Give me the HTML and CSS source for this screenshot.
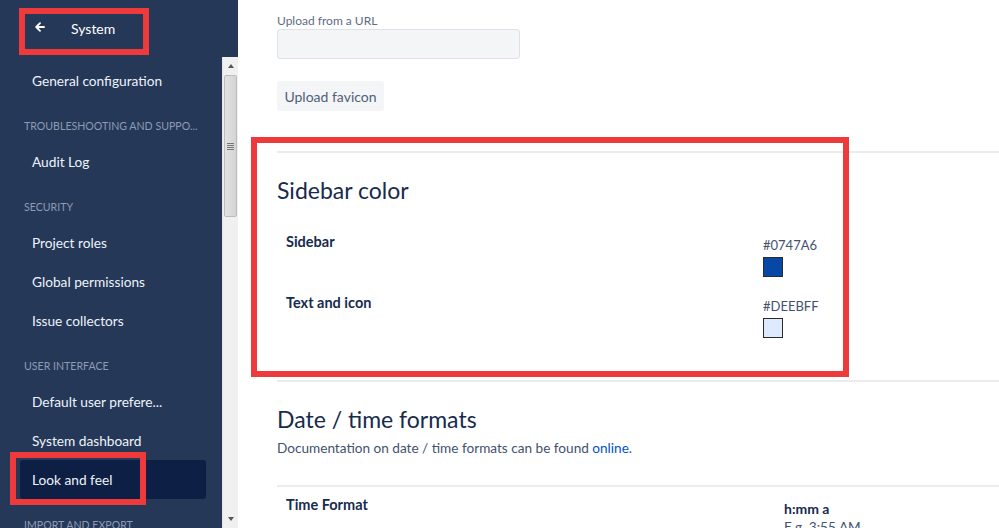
FILE: index.html
```html
<!DOCTYPE html>
<html lang="en">
<head>
<meta charset="utf-8">
<title>Look and feel</title>
<link rel="stylesheet" href="styles.css">
</head>
<body>
<div class="page">
  <aside class="sidebar">
    <div class="side-header">
      <span class="back-arrow">
        <svg width="10" height="10" viewBox="0 0 10 10"><path d="M9 5H1.5M5 1.2L1.2 5L5 8.8" fill="none" stroke="#ffffff" stroke-width="1.8" stroke-linecap="round" stroke-linejoin="round"/></svg>
      </span>
      <span class="side-title">System</span>
    </div>
    <div class="side-body">
      <nav class="side-nav">
        <a class="nav-item">General configuration</a>
        <div class="nav-heading">TROUBLESHOOTING AND SUPPO...</div>
        <a class="nav-item">Audit Log</a>
        <div class="nav-heading">SECURITY</div>
        <a class="nav-item">Project roles</a>
        <a class="nav-item">Global permissions</a>
        <a class="nav-item">Issue collectors</a>
        <div class="nav-heading">USER INTERFACE</div>
        <a class="nav-item">Default user prefere...</a>
        <a class="nav-item">System dashboard</a>
        <a class="nav-item selected">Look and feel</a>
        <div class="nav-heading">IMPORT AND EXPORT</div>
      </nav>
      <div class="scrollbar">
        <div class="sb-btn sb-up"><span class="tri-up"></span></div>
        <div class="sb-thumb"><span class="grip"></span></div>
        <div class="sb-track"></div>
        <div class="sb-btn sb-down"><span class="tri-down"></span></div>
      </div>
    </div>
  </aside>
  <main class="content">
    <div class="field">
      <label class="field-label">Upload from a URL</label>
      <div class="text-input"></div>
    </div>
    <button class="btn">Upload favicon</button>

    <section class="section sidebar-color">
      <h2 class="section-title">Sidebar color</h2>
      <div class="color-row first-row">
        <div class="row-label">Sidebar</div>
        <div class="color-value">
          <div class="hex">#0747A6</div>
          <div class="swatch swatch-blue"></div>
        </div>
      </div>
      <div class="color-row second-row">
        <div class="row-label">Text and icon</div>
        <div class="color-value">
          <div class="hex">#DEEBFF</div>
          <div class="swatch swatch-light"></div>
        </div>
      </div>
    </section>

    <section class="section date-formats">
      <h2 class="section-title title-date">Date / time formats</h2>
      <p class="doc-text">Documentation on date / time formats can be found <a class="link">online</a>.</p>
      <div class="format-table">
        <div class="format-row">
          <div class="row-label">Time Format</div>
          <div class="format-value">
            <div class="fmt">h:mm a</div>
            <div class="example">E.g. 3:55 AM</div>
          </div>
        </div>
      </div>
    </section>
  </main>
</div>
<div class="mark mark-system"></div>
<div class="mark mark-look"></div>
<div class="mark mark-color"></div>
</body>
</html>
```
FILE: styles.css
```css
* { box-sizing: border-box; }
html, body { margin: 0; padding: 0; }
body {
  width: 999px;
  height: 528px;
  overflow: hidden;
  background: #ffffff;
  font-family: "Lato", "Open Sans", sans-serif;
  color: #172b4d;
  position: relative;
}
.page {
  display: flex;
  height: 528px;
}
.sidebar {
  width: 238px;
  flex: none;
  background: #253858;
  display: flex;
  flex-direction: column;
}
.side-header {
  height: 57px;
  display: flex;
  align-items: center;
  padding-left: 35px;
  padding-bottom: 1px;
}
.back-arrow { width: 10px; height: 10px; display: flex; margin-top: -3px; }
.side-title {
  margin-left: 26px;
  color: #ffffff;
  font-size: 14px;
}
.side-body {
  flex: 1;
  display: flex;
  min-height: 0;
}
.side-nav {
  flex: 1;
  padding-top: 4px;
  display: flex;
  flex-direction: column;
}
.nav-item {
  display: flex;
  align-items: center;
  height: 39px;
  flex: none;
  margin: 0 16px 0 20px;
  padding-left: 12px;
  border-radius: 3px;
  color: #eef3fb;
  font-size: 13.7px;
}
.nav-item.selected { background: #0d1f45; }
.nav-heading {
  height: 42px;
  flex: none;
  padding: 20px 0 0 24px;
  font-size: 10.6px;
  line-height: 13px;
  color: #8d9bb3;
}
.scrollbar {
  width: 16px;
  flex: none;
  background: #f0f0f0;
  display: flex;
  flex-direction: column;
  border-left: 1px solid #e6e6e6;
}
.sb-btn {
  height: 18px;
  display: flex;
  align-items: center;
  justify-content: center;
  background: #f0f0f0;
}
.tri-up {
  width: 0; height: 0;
  border-left: 3.5px solid transparent;
  border-right: 3.5px solid transparent;
  border-bottom: 4px solid #555;
}
.tri-down {
  width: 0; height: 0;
  border-left: 3.5px solid transparent;
  border-right: 3.5px solid transparent;
  border-top: 4px solid #555;
}
.sb-thumb {
  height: 142px;
  margin: 0 1px;
  background: linear-gradient(to right, #e2e2e2, #d4d4d4);
  border: 1px solid #bcbcbc;
  border-radius: 2px;
  display: flex;
  align-items: center;
  justify-content: center;
}
.grip {
  width: 7px;
  height: 7px;
  background: repeating-linear-gradient(to bottom, #777 0 1px, transparent 1px 2px);
}
.sb-track { flex: 1; }

.content {
  flex: 1;
  padding-left: 39px;
  min-width: 0;
}
.field { padding-top: 14px; }
.field-label {
  display: block;
  font-size: 12px;
  line-height: 14px;
  color: #5e6c84;
}
.text-input {
  margin-top: 1px;
  width: 243px;
  height: 30px;
  background: #f4f5f7;
  border: 1px solid #dfe1e6;
  border-radius: 3px;
}
.btn {
  display: block;
  margin-top: 22px;
  height: 30px;
  width: 107px;
  border: none;
  border-radius: 3px;
  background: #f4f5f7;
  color: #505f79;
  font-family: inherit;
  font-size: 14px;
  padding: 0;
}
.section {
  border-top: 2px solid #ebecf0;
}
.sidebar-color {
  margin-top: 40px;
  padding-top: 24px;
  height: 229px;
}
.section-title {
  margin: 0;
  font-weight: 400;
  font-size: 23px;
  line-height: 26px;
  color: #172b4d;
}
.color-row {
  display: grid;
  grid-template-columns: 477px auto;
  padding-left: 9px;
}
.first-row { margin-top: 31px; }
.second-row { margin-top: 18px; }
.row-label {
  font-size: 14.5px;
  font-weight: 700;
  color: #172b4d;
  line-height: 16px;
}
.hex {
  font-size: 13px;
  line-height: 16px;
  color: #42526e;
  padding-top: 3px;
}
.swatch {
  width: 20px;
  height: 20px;
  margin-top: 4px;
  border: 1px solid #2b2b2b;
}
.swatch-blue { background: #0747a6; }
.swatch-light { background: #deebff; }

.date-formats { padding-top: 23px; }
.title-date { font-size: 23px; line-height: 28px; }
.doc-text {
  margin: 7px 0 0;
  font-size: 13.6px;
  line-height: 16px;
  color: #42526e;
}
.link { color: #0052cc; }
.format-table {
  margin-top: 29px;
  border-top: 2px solid #ebecf0;
  padding-top: 10px;
}
.format-row {
  display: grid;
  grid-template-columns: 498px auto;
  padding-left: 9px;
}
.fmt {
  font-size: 14px;
  font-weight: 700;
  line-height: 16px;
  padding-top: 4px;
}
.example {
  font-size: 13.6px;
  line-height: 16px;
  color: #42526e;
  padding-top: 2px;
}

.mark {
  position: absolute;
  border: 6px solid #ee3a3b;
  pointer-events: none;
}
.mark-system { left: 19px; top: 8px; width: 130px; height: 47px; }
.mark-look { left: 10px; top: 452px; width: 136px; height: 53px; }
.mark-color { left: 251px; top: 137px; width: 598px; height: 240px; }
```
